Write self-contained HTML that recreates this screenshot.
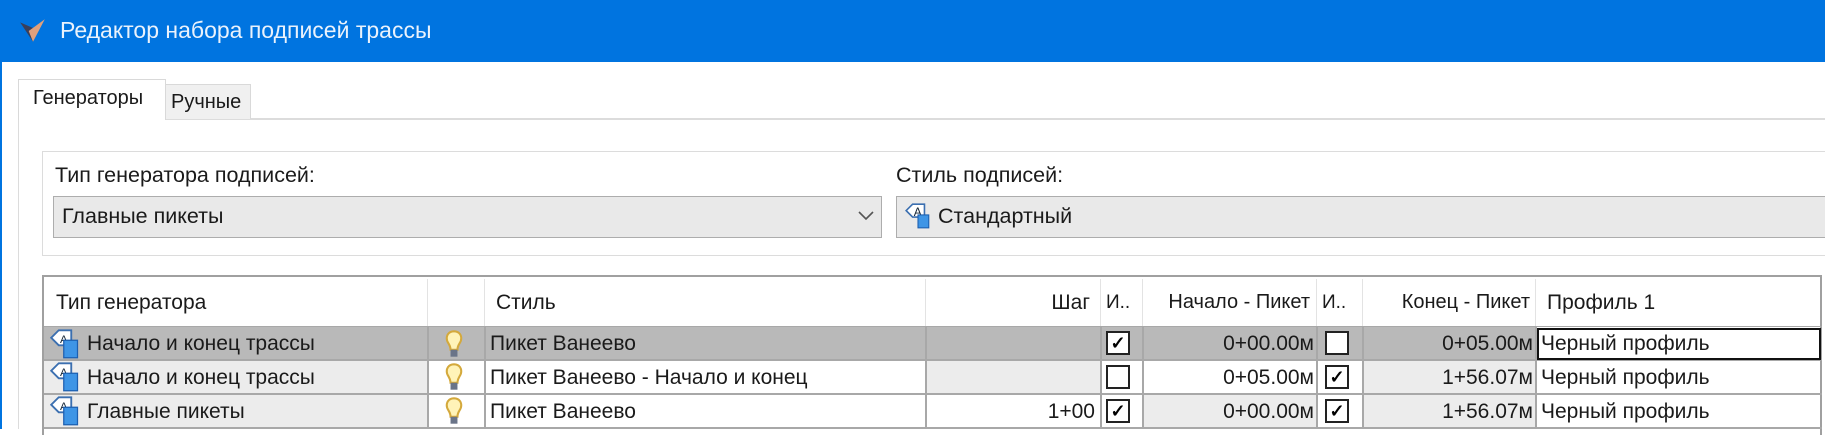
<!DOCTYPE html>
<html><head><meta charset="utf-8">
<style>
*{margin:0;padding:0;box-sizing:border-box}
body{width:1825px;height:429px;overflow:hidden;background:#fff;font-family:"Liberation Sans",sans-serif;color:#1a1a1a;position:relative}
.a{position:absolute}
.t{position:absolute;white-space:nowrap;font-size:21px;line-height:33px}
.cb{position:absolute;width:24px;height:24px;border:2px solid #222;background:#fff;font-size:18px;line-height:20px;text-align:center;font-weight:bold;color:#000}
</style></head><body>
<div class="a" style="left:0;top:0;width:1825px;height:62px;background:#0074e0"></div>
<div class="a" style="left:0;top:0;width:2px;height:429px;background:#0074e0"></div>
<svg class="a" style="left:18px;top:16px" width="30" height="30" viewBox="0 0 28 28"><path d="M2 6 L14 24 L16 12 Z" fill="#3a3f5a"/><path d="M10 14 L14 24 L25 3 Z" fill="#e0a07c"/></svg>
<div class="t" style="left:60px;top:13px;font-size:23px;color:#eaf2fc;line-height:34px">Редактор набора подписей трассы</div>
<div class="a" style="left:18px;top:118px;width:1807px;height:2px;background:#dcdcdc"></div>
<div class="a" style="left:18px;top:118px;width:1px;height:311px;background:#dcdcdc"></div>
<div class="a" style="left:165px;top:84px;width:86px;height:35px;background:#f0f0f0;border:1px solid #d9d9d9;border-bottom:none"></div>
<div class="a" style="left:18px;top:79px;width:148px;height:41px;background:#fff;border:1px solid #d9d9d9;border-bottom:none"></div>
<div class="t" style="left:33px;top:82px;font-size:20px">Генераторы</div>
<div class="t" style="left:171px;top:86px;font-size:20px">Ручные</div>
<div class="a" style="left:42px;top:151px;width:1800px;height:105px;border:1px solid #dcdcdc"></div>
<div class="t" style="left:55px;top:159px;font-size:21.5px">Тип генератора подписей:</div>
<div class="a" style="left:53px;top:196px;width:829px;height:42px;background:#e9e9e9;border:1px solid #adadad"></div>
<div class="t" style="left:62px;top:200px;font-size:21.5px">Главные пикеты</div>
<svg class="a" style="left:858px;top:211px" width="16" height="10"><path d="M1 1 L8 8 L15 1" stroke="#555" stroke-width="1.6" fill="none"/></svg>
<div class="t" style="left:896px;top:159px;font-size:21.5px">Стиль подписей:</div>
<div class="a" style="left:896px;top:196px;width:940px;height:42px;background:#e9e9e9;border:1px solid #adadad"></div>
<svg class="a" style="left:904px;top:202px" width="28" height="28" viewBox="0 0 26 26"><path d="M8 2 H19 V14 H8 L2 8 Z" fill="#fff" stroke="#3b6fb0" stroke-width="1.5"/><text x="9" y="13" font-size="11" font-family="Liberation Sans" fill="#123">A</text><rect x="13" y="12" width="10" height="12" fill="#3e95e6" stroke="#1d5fb0"/></svg>
<div class="t" style="left:938px;top:200px;font-size:21.5px">Стандартный</div>
<div class="a" style="left:42px;top:275px;width:1780px;height:160px;border:2px solid #a0a0a0;border-bottom:none;background:#fff"></div>
<div class="a" style="left:427px;top:279px;width:1px;height:48px;background:#e3e3e3"></div>
<div class="a" style="left:484px;top:279px;width:1px;height:48px;background:#e3e3e3"></div>
<div class="a" style="left:925px;top:279px;width:1px;height:48px;background:#e3e3e3"></div>
<div class="a" style="left:1100px;top:279px;width:1px;height:48px;background:#e3e3e3"></div>
<div class="a" style="left:1142px;top:279px;width:1px;height:48px;background:#e3e3e3"></div>
<div class="a" style="left:1316px;top:279px;width:1px;height:48px;background:#e3e3e3"></div>
<div class="a" style="left:1362px;top:279px;width:1px;height:48px;background:#e3e3e3"></div>
<div class="a" style="left:1535px;top:279px;width:1px;height:48px;background:#e3e3e3"></div>
<div class="t" style="left:56px;top:286px">Тип генератора</div>
<div class="t" style="left:496px;top:286px">Стиль</div>
<div class="t" style="left:925px;top:286px;width:165px;text-align:right">Шаг</div>
<div class="t" style="left:1106px;top:286px;font-size:19px">И..</div>
<div class="t" style="left:1142px;top:286px;width:168px;text-align:right;font-size:20px">Начало - Пикет</div>
<div class="t" style="left:1322px;top:286px;font-size:19px">И..</div>
<div class="t" style="left:1362px;top:286px;width:168px;text-align:right;font-size:20px">Конец - Пикет</div>
<div class="t" style="left:1547px;top:286px">Профиль 1</div>
<div class="a" style="left:44px;top:327px;width:1491px;height:33px;background:#b9b9b9"></div>
<div class="a" style="left:44px;top:360px;width:383px;height:67px;background:#ececec"></div>
<div class="a" style="left:925px;top:360px;width:175px;height:33px;background:#ececec"></div>
<div class="a" style="left:1362px;top:360px;width:173px;height:69px;background:#ececec"></div>
<div class="a" style="left:1142px;top:394px;width:174px;height:35px;background:#ececec"></div>
<div class="a" style="left:44px;top:326px;width:1778px;height:1px;background:#a8a8a8"></div>
<div class="a" style="left:44px;top:359px;width:1778px;height:2px;background:#a8a8a8"></div>
<div class="a" style="left:44px;top:393px;width:1778px;height:2px;background:#a8a8a8"></div>
<div class="a" style="left:44px;top:427px;width:1778px;height:2px;background:#a8a8a8"></div>
<div class="a" style="left:427px;top:327px;width:2px;height:102px;background:#a8a8a8"></div>
<div class="a" style="left:484px;top:327px;width:2px;height:102px;background:#a8a8a8"></div>
<div class="a" style="left:925px;top:327px;width:2px;height:102px;background:#a8a8a8"></div>
<div class="a" style="left:1100px;top:327px;width:2px;height:102px;background:#a8a8a8"></div>
<div class="a" style="left:1142px;top:327px;width:2px;height:102px;background:#a8a8a8"></div>
<div class="a" style="left:1316px;top:327px;width:2px;height:102px;background:#a8a8a8"></div>
<div class="a" style="left:1362px;top:327px;width:2px;height:102px;background:#a8a8a8"></div>
<div class="a" style="left:1535px;top:327px;width:2px;height:102px;background:#a8a8a8"></div>
<div class="a" style="left:1537px;top:328px;width:284px;height:32px;border:2px solid #111;background:#fff"></div>
<svg class="a" style="left:50px;top:329px" width="30" height="30" viewBox="0 0 24 24"><path d="M7 1 H17 V13 H7 L1 7 Z" fill="#fff" stroke="#3b6fb0" stroke-width="1.5"/><text x="8" y="11" font-size="9" font-family="Liberation Sans" fill="#123">A</text><rect x="11" y="9" width="11" height="14" fill="#3e95e6" stroke="#1d5fb0"/></svg>
<svg class="a" style="left:50px;top:362px" width="30" height="30" viewBox="0 0 24 24"><path d="M7 1 H17 V13 H7 L1 7 Z" fill="#fff" stroke="#3b6fb0" stroke-width="1.5"/><text x="8" y="11" font-size="9" font-family="Liberation Sans" fill="#123">A</text><rect x="11" y="9" width="11" height="14" fill="#3e95e6" stroke="#1d5fb0"/></svg>
<svg class="a" style="left:50px;top:396px" width="30" height="30" viewBox="0 0 24 24"><path d="M7 1 H17 V13 H7 L1 7 Z" fill="#fff" stroke="#3b6fb0" stroke-width="1.5"/><text x="8" y="11" font-size="9" font-family="Liberation Sans" fill="#123">A</text><rect x="11" y="9" width="11" height="14" fill="#3e95e6" stroke="#1d5fb0"/></svg>
<div class="t" style="left:87px;top:327px">Начало и конец трассы</div>
<div class="t" style="left:87px;top:361px">Начало и конец трассы</div>
<div class="t" style="left:87px;top:395px">Главные пикеты</div>
<svg class="a" style="left:444px;top:329px" width="20" height="30" viewBox="0 0 16 26"><path d="M8 2 C3 2 1 6 2 10 C3 13 5 14 5 18 H11 C11 14 13 13 14 10 C15 6 13 2 8 2 Z" fill="#fff3b8" stroke="#d4a93c" stroke-width="1.8"/><rect x="5" y="18" width="6" height="6" fill="#6a7488"/></svg>
<svg class="a" style="left:444px;top:362px" width="20" height="30" viewBox="0 0 16 26"><path d="M8 2 C3 2 1 6 2 10 C3 13 5 14 5 18 H11 C11 14 13 13 14 10 C15 6 13 2 8 2 Z" fill="#fff3b8" stroke="#d4a93c" stroke-width="1.8"/><rect x="5" y="18" width="6" height="6" fill="#6a7488"/></svg>
<svg class="a" style="left:444px;top:396px" width="20" height="30" viewBox="0 0 16 26"><path d="M8 2 C3 2 1 6 2 10 C3 13 5 14 5 18 H11 C11 14 13 13 14 10 C15 6 13 2 8 2 Z" fill="#fff3b8" stroke="#d4a93c" stroke-width="1.8"/><rect x="5" y="18" width="6" height="6" fill="#6a7488"/></svg>
<div class="t" style="left:490px;top:327px">Пикет Ванеево</div>
<div class="t" style="left:490px;top:361px">Пикет Ванеево - Начало и конец</div>
<div class="t" style="left:490px;top:395px">Пикет Ванеево</div>
<div class="t" style="left:925px;top:395px;width:170px;text-align:right">1+00</div>
<div class="cb" style="left:1106px;top:331px">✓</div>
<div class="cb" style="left:1106px;top:365px"></div>
<div class="cb" style="left:1106px;top:399px">✓</div>
<div class="t" style="left:1142px;top:327px;width:172px;text-align:right">0+00.00м</div>
<div class="t" style="left:1142px;top:361px;width:172px;text-align:right">0+05.00м</div>
<div class="t" style="left:1142px;top:395px;width:172px;text-align:right">0+00.00м</div>
<div class="cb" style="left:1325px;top:331px"></div>
<div class="cb" style="left:1325px;top:365px">✓</div>
<div class="cb" style="left:1325px;top:399px">✓</div>
<div class="t" style="left:1362px;top:327px;width:171px;text-align:right">0+05.00м</div>
<div class="t" style="left:1362px;top:361px;width:171px;text-align:right">1+56.07м</div>
<div class="t" style="left:1362px;top:395px;width:171px;text-align:right">1+56.07м</div>
<div class="t" style="left:1541px;top:327px">Черный профиль</div>
<div class="t" style="left:1541px;top:361px">Черный профиль</div>
<div class="t" style="left:1541px;top:395px">Черный профиль</div>
</body></html>
